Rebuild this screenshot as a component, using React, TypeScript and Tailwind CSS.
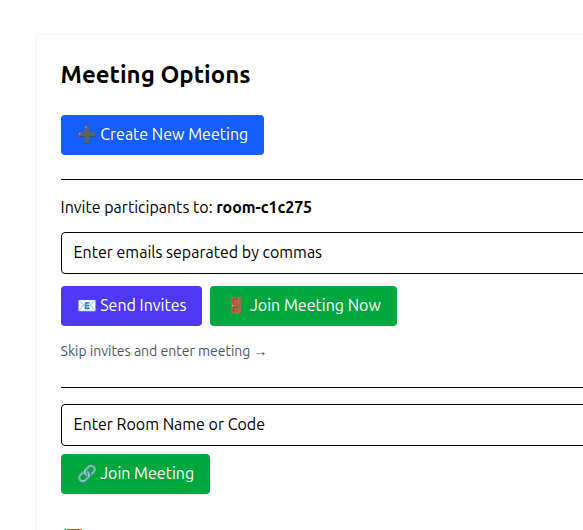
import type { ReactNode } from "react";

function Button({ color, icon, children }: { color: string; icon: string; children: ReactNode }) {
  return (
    <button className={`h-10 rounded pt-[7px] pb-[9px] pl-4 text-left whitespace-nowrap text-white ${color}`}>
      <span className="-mr-[0.45px] ml-[0.45px]">{icon}</span> {children}
    </button>
  );
}

export default function App() {
  return (
    <main className="h-[530px] overflow-hidden bg-white pt-[34.6px] pl-[36.6px] font-['Ubuntu','Noto_Sans','Noto_Color_Emoji',sans-serif] text-base text-black">
      <section className="h-[640px] w-[800px] rounded bg-white p-6 shadow-[0_0_3px_rgba(0,0,0,0.1)]">
        <h2 className="mb-6 text-2xl font-semibold whitespace-nowrap">Meeting Options</h2>
        <Button color="w-[203px] bg-[#155dfc]" icon="➕">Create New Meeting</Button>
        <hr className="mt-6 mb-[15px] border-black" />
        <p className="mb-[13px] whitespace-nowrap">
          Invite participants to: <strong className="font-semibold tracking-[-0.08px]">room-c1c275</strong>
        </p>
        <input
          className="mb-3 block h-[42px] w-full rounded border border-black px-3 pt-[7px] pb-[9px] placeholder:text-black"
          placeholder="Enter emails separated by commas"
        />
        <div className="flex gap-2">
          <Button color="w-[141.8px] bg-[#4f39f6]" icon="📧">Send Invites</Button>
          <Button color="w-[186.6px] bg-[#00a63e]" icon="🚪">Join Meeting Now</Button>
        </div>
        <p className="mt-[15px] text-sm whitespace-nowrap text-[#4a5565]">Skip invites and enter meeting →</p>
        <hr className="mt-[26px] mb-4 border-black" />
        <input
          className="mb-2 block h-[42px] w-full rounded border border-black px-3 pt-[7px] pb-[9px] placeholder:text-black"
          placeholder="Enter Room Name or Code"
        />
        <Button color="w-[149px] bg-[#00a63e]" icon="🔗">Join Meeting</Button>
        <h3 className="mt-[30px] pl-0.5 text-lg font-semibold">📅</h3>
      </section>
    </main>
  );
}
